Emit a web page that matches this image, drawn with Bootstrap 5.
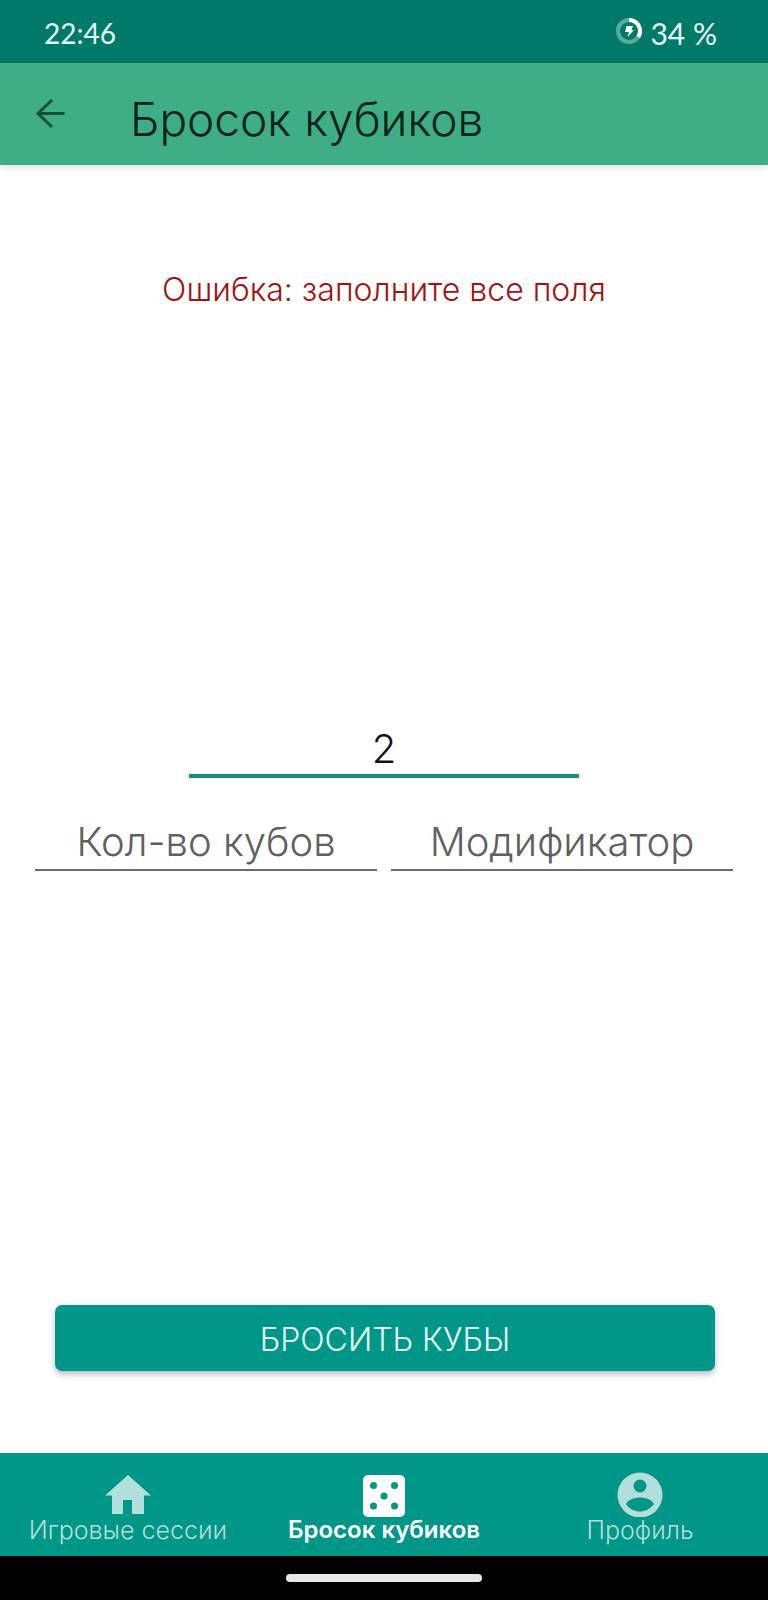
<!DOCTYPE html>
<html lang="ru">
<head>
<meta charset="utf-8">
<meta name="viewport" content="width=device-width, initial-scale=1">
<title>Бросок кубиков</title>
<link href="https://cdn.jsdelivr.net/npm/bootstrap@5.3.0/dist/css/bootstrap.min.css" rel="stylesheet">
<style>
  body { font-family: Inter, "Open Sans", sans-serif; font-weight: 300; color: #141414; background: #fff; }
  .status-bar { background: #007969; color: #e6fffa; height: 63px; font-family: Lato, sans-serif; font-size: 30px; font-weight: 400; padding: 3px 51px 0 44px; }
  .clock { font-size: 28px; }
  .app-bar { background: #3fad85; height: 102px; box-shadow: 0 2px 8px rgba(0,0,0,.14); padding: 0 32px; }
  .back-link { color: #14503c; line-height: 1; }
  .app-title { font-size: 46px; line-height: 52px; font-weight: 300; color: #04231a; margin: 10px 0 0 62px; }
  .roll-form { padding: 103px 35px 82px; }
  .error-text { color: #a31212; font-size: 32px; line-height: 44px; }
  .fields { padding-bottom: 20px; gap: 41px; }
  .line-input { border: 0; border-bottom: 2px solid #6b6b6b; border-radius: 0; padding: 0 0 6px; height: 52px; font-size: 40px; line-height: 44px; font-weight: 300; text-align: center; color: #141414; background: transparent; }
  .line-input::placeholder { color: #606060; opacity: 1; }
  .line-input:focus { box-shadow: none; border-color: #1a8f80; background: transparent; }
  .line-input.is-current { width: 56%; padding-bottom: 4px; border-bottom: 4px solid #1a8f80; }
  .pair { gap: 14px; }
  .btn-roll { --bs-btn-bg: #009688; --bs-btn-color: #e6fffa; --bs-btn-hover-bg: #00877a; --bs-btn-hover-color: #fff; --bs-btn-border-width: 0; --bs-btn-border-radius: 7px; font-size: 32px; font-weight: 300; line-height: 36px; height: 66px; padding: 4px 0 0; margin: 0 18px 0 20px; box-shadow: 0 3px 6px rgba(0,0,0,.28); }
  .tab-bar { background: #009688; height: 103px; }
  .tab-link { color: #b2dfdb; font-size: 25px; line-height: 26px; padding-top: 18px; }
  .tab-link.active { color: #fff; font-size: 24px; font-weight: 600; }
  .gesture-area { background: #000; height: 44px; }
  .gesture-pill { width: 196px; height: 8px; background: #e8e8e8; }
</style>
</head>
<body class="d-flex flex-column min-vh-100">
  <div class="status-bar d-flex align-items-center justify-content-between">
    <span class="clock">22:46</span>
    <span class="d-flex align-items-center gap-2">
      <svg class="mb-1" width="26" height="26" viewBox="0 0 26 26" aria-hidden="true">
        <circle cx="13" cy="13" r="11" fill="none" stroke="#5aaba0" stroke-width="4"/>
        <path d="M13 2A11 11 0 0 1 22.300 18.900" fill="none" stroke="#fff" stroke-width="4"/>
        <path d="M10.500 8h6.500l-1.500 4H18l-6.500 7 1.500-5H9z" fill="#fff"/>
      </svg>
      34 %
    </span>
  </div>
  <header class="app-bar d-flex align-items-center">
    <a href="#" class="back-link" aria-label="Назад">
      <svg width="36" height="36" viewBox="0 0 36 36" fill="none" stroke="currentColor" stroke-width="3" aria-hidden="true"><path d="M32.500 17.500H6M20 4L6 17.500 20 31"/></svg>
    </a>
    <h1 class="app-title">Бросок кубиков</h1>
  </header>
  <form class="roll-form flex-grow-1 d-flex flex-column justify-content-between">
    <div class="error-text text-center" role="alert">Ошибка: заполните все поля</div>
    <div class="fields d-flex flex-column">
      <input class="form-control line-input is-current mx-auto" type="text" inputmode="numeric" value="2" aria-label="Количество граней">
      <div class="pair d-flex">
        <input class="form-control line-input" type="text" inputmode="numeric" placeholder="Кол-во кубов" aria-label="Кол-во кубов">
        <input class="form-control line-input" type="text" inputmode="numeric" placeholder="Модификатор" aria-label="Модификатор">
      </div>
    </div>
    <button type="button" class="btn btn-roll">БРОСИТЬ КУБЫ</button>
  </form>
  <nav class="tab-bar row g-0 text-center">
    <a href="#" class="tab-link col-4 d-flex flex-column align-items-center text-decoration-none">
      <svg width="46" height="46" viewBox="0 0 46 46" fill="currentColor" aria-hidden="true"><path d="M23 4L46 24.500H39V43H27V29H18V43H7V24.500H0z"/></svg>
      Игровые сессии
    </a>
    <a href="#" class="tab-link active col-4 d-flex flex-column align-items-center text-decoration-none" aria-current="page">
      <svg width="46" height="46" viewBox="0 0 46 46" aria-hidden="true"><rect x="2" y="4" width="42" height="42" rx="5" fill="currentColor"/><g fill="#009688"><circle cx="12.500" cy="14.500" r="3.500"/><circle cx="33.500" cy="14.500" r="3.500"/><circle cx="23" cy="25" r="3.500"/><circle cx="12.500" cy="35" r="3.500"/><circle cx="33.500" cy="35" r="3.500"/></g></svg>
      Бросок кубиков
    </a>
    <a href="#" class="tab-link col-4 d-flex flex-column align-items-center text-decoration-none">
      <svg width="46" height="46" viewBox="0 0 46 46" aria-hidden="true"><circle cx="23" cy="24" r="22.500" fill="currentColor"/><g fill="#009688"><circle cx="23" cy="15" r="6.500"/><path d="M9 33C11 28.500 18 26.500 23 26.500S35 28.500 37 33C33 38 28 40.500 23 40.500S12 38 9 33z"/></g></svg>
      Профиль
    </a>
  </nav>
  <div class="gesture-area d-flex align-items-center justify-content-center"><div class="gesture-pill rounded-pill"></div></div>
<script src="https://cdn.jsdelivr.net/npm/bootstrap@5.3.0/dist/js/bootstrap.bundle.min.js"></script>
</body>
</html>
